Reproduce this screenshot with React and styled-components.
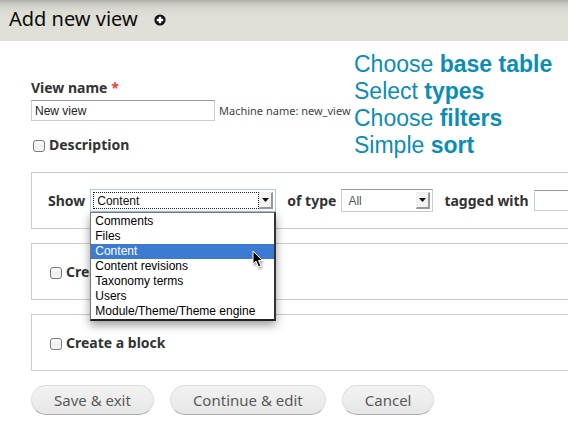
import React from "react";
import styled, { createGlobalStyle } from "styled-components";

const ui = '"Noto Sans", "Open Sans", sans-serif';
const control = '"Liberation Sans", Arial, sans-serif';

const GlobalStyle = createGlobalStyle`
  *, *::before, *::after { box-sizing: border-box; }
  body { margin: 0; background: #fff; color: #333; font-family: ${ui}; }
`;

const Page = styled.div`
  position: relative;
  margin-right: 16px;
  overflow: hidden;
`;

const Header = styled.header`
  display: flex;
  align-items: center;
  gap: 16px;
  height: 41px;
  padding: 0 9px 3px;
  background: linear-gradient(#adada7 0, #cbcbc5 4px, #dadad3 10px, #e0e0d8 18px);
`;

const Title = styled.h1`
  margin: 0;
  color: #0c0c0c;
  font-size: 20px;
  font-weight: 400;
  line-height: 24px;
`;

const AddButton = styled.button`
  display: flex;
  margin: 2px 0 0;
  padding: 0;
  border: 0;
  background: none;
`;

const Form = styled.form`
  display: flex;
  flex-direction: column;
  gap: 14px;
  padding: 37px 0 10px 31px;
`;

const Identity = styled.div`
  display: flex;
  flex-direction: column;
  gap: 14px;
  padding-bottom: 3px;
`;

const NameField = styled.div`
  display: flex;
  flex-direction: column;
  gap: 2px;
`;

const Label = styled.label`
  flex: none;
  font-size: 14px;
  font-weight: 700;
  line-height: 20px;
`;

const Required = styled.span`
  color: #e8433c;
`;

const Line = styled.div`
  display: flex;
  align-items: center;
  gap: 4px;
`;

const TextInput = styled.input`
  flex: none;
  width: ${(p) => p.$width}px;
  height: 21px;
  padding: 0 3px;
  border: 1px solid #ccc;
  border-top-color: #999;
  border-radius: 0;
  outline: 0;
  background: #fff;
  color: #222;
  font: 12px ${control};
`;

const MachineName = styled.small`
  color: #444;
  font-size: 11px;
`;

const CheckLine = styled.div`
  display: flex;
  align-items: center;
  gap: 4px;
  padding-left: 2px;
`;

const Checkbox = styled.input`
  appearance: none;
  width: 12px;
  height: 12px;
  margin: 2px 0 0;
  border: 1px solid #777;
  border-radius: 3px;
  background: linear-gradient(#fff, #eee 50%, #fafafa);
`;

const Panel = styled.section`
  display: flex;
  align-items: center;
  height: 57px;
  padding-left: 16px;
  border: 1px solid #ccc;
  border-right: 0;
`;

const FilterPanel = styled(Panel)`
  gap: 11px;
`;

const Filter = styled.div`
  display: flex;
  flex: none;
  align-items: center;
  gap: 5px;
`;

const SelectBox = styled.div`
  position: relative;
  width: ${(p) => p.$width}px;
  height: 23px;
`;

const Select = styled.select`
  appearance: none;
  display: block;
  width: 100%;
  height: 100%;
  padding: 0 22px 0 6px;
  border: 1px solid ${(p) => (p.$open ? "#a9cbed" : "#ccc")};
  border-top-color: ${(p) => (p.$open ? "#a9cbed" : "#999")};
  border-radius: 0;
  outline: 0;
  background: #fff;
  color: ${(p) => (p.$open ? "#111" : "#555")};
  font: 12px ${control};
`;

const FocusRing = styled.span`
  position: absolute;
  inset: 3px 17px 3px 3px;
  border: 1px dotted #222;
  pointer-events: none;
`;

const Arrow = styled.span`
  position: absolute;
  top: 3px;
  right: 3px;
  display: grid;
  place-items: center;
  width: 14px;
  height: 17px;
  border: 1px solid #eee;
  border-right: 2px solid #999;
  border-bottom: 2px solid #999;
  background: #f2f2f2;
  pointer-events: none;
`;

const Menu = styled.ul`
  position: absolute;
  z-index: 2;
  top: 100%;
  left: 0;
  width: 100%;
  margin: 0;
  padding: 1px 0 0;
  border: 1px solid #777;
  border-right: 2px solid #333;
  border-bottom: 2px solid #222;
  background: #fff;
  box-shadow: 0 4px 9px rgba(0, 0, 0, 0.4);
  list-style: none;
`;

const Option = styled.li`
  padding-left: 4px;
  background: ${(p) => (p["aria-selected"] ? "#3d7bd3" : "transparent")};
  color: ${(p) => (p["aria-selected"] ? "#fff" : "#000")};
  font: 12px/15px ${control};
`;

const Cursor = styled.svg`
  position: absolute;
  z-index: 3;
  top: 61px;
  left: 162px;
  filter: drop-shadow(1px 2px 1px rgba(0, 0, 0, 0.35));
`;

const Actions = styled.div`
  display: flex;
  gap: 16px;
`;

const Button = styled.button`
  height: 30px;
  padding: 0 22px;
  border: 1px solid #ddd;
  border-bottom-color: #aaa;
  border-radius: 15px;
  background: linear-gradient(#f3f3f3, #e6e6e6);
  color: #5a5a5a;
  font: 15px ${ui};
`;

const Notes = styled.aside`
  position: absolute;
  top: 51px;
  left: 354px;
  color: #0b8db5;
  font: 23px/27px ${control};
  white-space: nowrap;
`;

const Note = styled.p`
  margin: 0;
`;

const entities = [
  "Comments",
  "Files",
  "Content",
  "Content revisions",
  "Taxonomy terms",
  "Users",
  "Module/Theme/Theme engine",
];

const notes = [
  ["Choose", "base table"],
  ["Select", "types"],
  ["Choose", "filters"],
  ["Simple", "sort"],
];

function DropArrow() {
  return (
    <Arrow>
      <svg width="7" height="4" viewBox="0 0 7 4" aria-hidden="true">
        <path d="M0 0h7L3.5 4z" fill="#111" />
      </svg>
    </Arrow>
  );
}

function CheckField({ id, label }) {
  return (
    <CheckLine>
      <Checkbox type="checkbox" id={id} />
      <Label htmlFor={id}>{label}</Label>
    </CheckLine>
  );
}

export default function App() {
  return (
    <>
      <GlobalStyle />
      <Page>
        <Header>
          <Title>Add new view</Title>
          <AddButton type="button" aria-label="Add to shortcuts">
            <svg width="12" height="12" viewBox="0 0 12 12" aria-hidden="true">
              <circle cx="6" cy="6" r="5.6" fill="#111" />
              <path d="M6 2.8v6.4M2.8 6h6.4" stroke="#fff" strokeWidth="2.4" />
            </svg>
          </AddButton>
        </Header>
        <Form onSubmit={(e) => e.preventDefault()}>
          <Identity>
            <NameField>
              <Label htmlFor="name">
                View name <Required>*</Required>
              </Label>
              <Line>
                <TextInput id="name" $width={184} defaultValue="New view" />
                <MachineName>Machine name: new_view</MachineName>
              </Line>
            </NameField>
            <CheckField id="description" label="Description" />
          </Identity>
          <FilterPanel>
            <Filter>
              <Label htmlFor="show">Show</Label>
              <SelectBox $width={186}>
                <Select id="show" defaultValue="Content" $open>
                  {entities.map((name) => (
                    <option key={name}>{name}</option>
                  ))}
                </Select>
                <FocusRing />
                <DropArrow />
                <Menu role="listbox" aria-label="Show">
                  {entities.map((name) => (
                    <Option key={name} role="option" aria-selected={name === "Content"}>
                      {name}
                    </Option>
                  ))}
                </Menu>
                <Cursor width="12" height="18" viewBox="0 0 12 18" aria-hidden="true">
                  <path
                    d="M1 1v13l3-3 2.5 6 2.5-1-2.5-5.5h4z"
                    fill="#000"
                    stroke="#fff"
                    strokeWidth="1"
                  />
                </Cursor>
              </SelectBox>
            </Filter>
            <Filter>
              <Label htmlFor="type">of type</Label>
              <SelectBox $width={92}>
                <Select id="type">
                  <option>All</option>
                </Select>
                <DropArrow />
              </SelectBox>
            </Filter>
            <Filter>
              <Label htmlFor="tags">tagged with</Label>
              <TextInput id="tags" $width={184} />
            </Filter>
          </FilterPanel>
          <Panel>
            <CheckField id="page" label="Create a page" />
          </Panel>
          <Panel>
            <CheckField id="block" label="Create a block" />
          </Panel>
          <Actions>
            <Button type="submit">Save &amp; exit</Button>
            <Button type="button">Continue &amp; edit</Button>
            <Button type="button">Cancel</Button>
          </Actions>
        </Form>
        <Notes>
          {notes.map(([verb, subject]) => (
            <Note key={subject}>
              {verb} <strong>{subject}</strong>
            </Note>
          ))}
        </Notes>
      </Page>
    </>
  );
}
